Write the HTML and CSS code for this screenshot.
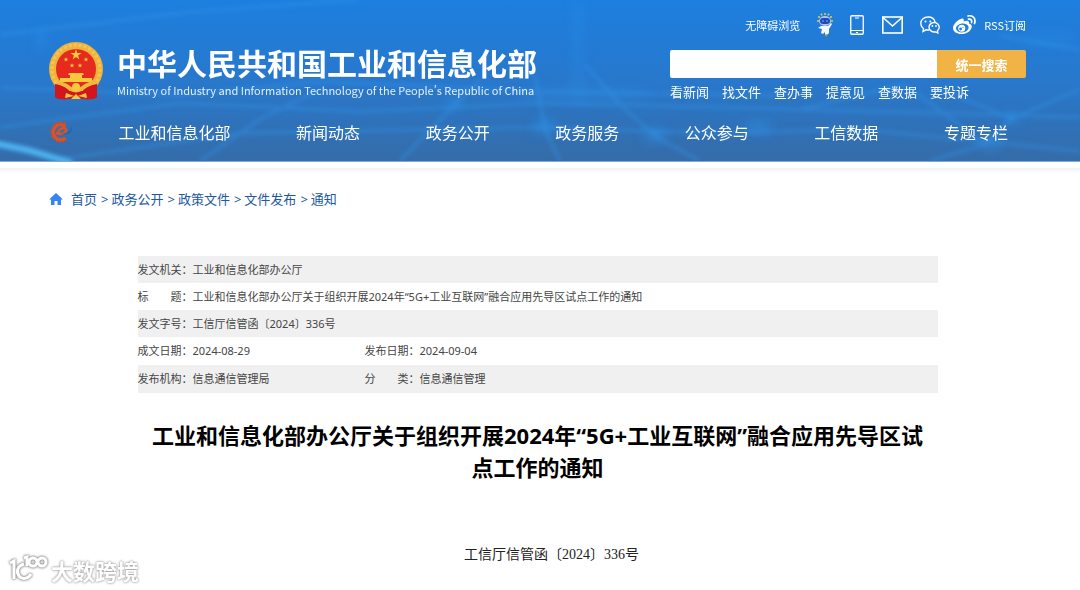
FILE: index.html
```html
<!DOCTYPE html>
<html lang="zh-CN">
<head>
    <meta charset="UTF-8">
    <meta name="viewport" content="width=device-width, initial-scale=1.0">
    <title>工业和信息化部办公厅关于组织开展2024年“5G+工业互联网”融合应用先导区试点工作的通知</title>
    <link rel="stylesheet" href="styles.css">
</head>
<body>

<header class="header">
    <svg class="header-bg" viewBox="0 0 1080 162" preserveAspectRatio="none" aria-hidden="true">
        <defs>
            <filter id="soft" x="-20%" y="-20%" width="140%" height="140%"><feGaussianBlur stdDeviation="2"/></filter>
            <filter id="wide" x="-50%" y="-50%" width="200%" height="200%"><feGaussianBlur stdDeviation="6"/></filter>
        </defs>
        <g fill="none" stroke="#3396ea" stroke-width="3" opacity=".45" filter="url(#soft)">
            <path d="M0 35 L190 12 L360 0"/>
            <path d="M0 128 L180 104 L360 112 L540 104 L720 108 L910 113 L1080 118"/>
            <path d="M60 160 L240 134 L540 128 L720 134 L860 130 L1080 152"/>
            <path d="M0 88 L180 96 L320 82 L540 92 L780 96"/>
            <path d="M585 65 L625 110 L660 140 L700 162"/>
            <path d="M535 75 L545 130 L560 162"/>
            <path d="M400 162 L455 105 L480 80"/>
            <path d="M940 90 L1012 119 L985 145 L930 162"/>
            <path d="M1012 119 L1080 90"/>
            <path d="M800 110 L905 85 L985 145"/>
            <path d="M1000 36 L1080 50"/>
            <path d="M200 162 L260 120 L320 90"/>
        </g>
        <g fill="#2f9bf5" opacity=".45" filter="url(#wide)">
            <rect x="573" y="0" width="10" height="105" opacity=".5"/>
            <rect x="38" y="28" width="6" height="22"/>
            <ellipse cx="585" cy="95" rx="70" ry="8" opacity=".5"/>
            <ellipse cx="545" cy="127" rx="12" ry="7"/>
            <ellipse cx="655" cy="136" rx="12" ry="7"/>
            <ellipse cx="758" cy="128" rx="14" ry="6"/>
            <ellipse cx="1012" cy="118" rx="8" ry="6"/>
            <ellipse cx="990" cy="144" rx="12" ry="6"/>
            <ellipse cx="454" cy="104" rx="8" ry="6"/>
            <ellipse cx="1050" cy="40" rx="30" ry="8" opacity=".4"/>
        </g>
        <path d="M-6 144 L28 151 L72 164" fill="none" stroke="#4fb9f6" stroke-width="6" filter="url(#soft)"/>
    </svg>

    <div class="wrap">
        <div class="masthead">
            <a class="brand" href="#">
                <svg class="emblem" viewBox="0 0 54 58" aria-hidden="true">
                    <path d="M7 40 L6 55 Q12 58 18 57 L36 57 Q43 58 48 55 L47 40 Z" fill="#d3161c"/>
                    <circle cx="27" cy="27" r="27" fill="#efb23c"/>
                    <circle cx="27" cy="27" r="24" fill="none" stroke="#f5c550" stroke-width="3" stroke-dasharray="3 2"/>
                    <circle cx="27" cy="27" r="20" fill="#e62a1d"/>
                    <g fill="#f8c93e">
                        <path d="M27 7 L28.3 11 L32.5 11 L29.1 13.5 L30.4 17.5 L27 15 L23.6 17.5 L24.9 13.5 L21.5 11 L25.7 11 Z"/>
                        <path id="star" d="M17 15 L17.6 16.7 L19.4 16.7 L18 17.8 L18.5 19.5 L17 18.5 L15.5 19.5 L16 17.8 L14.6 16.7 L16.4 16.7 Z"/>
                        <use href="#star" x="20"/>
                        <use href="#star" x="6" y="6"/>
                        <use href="#star" x="14" y="6"/>
                        <path d="M20 31 H34 L35 33 H33 V36 H43 V40 H11 V36 H21 V33 H19 Z"/>
                    </g>
                    <path d="M6 42 Q14 43 20 48 L18 57 Q9 58 6 55 Z" fill="#d3161c"/>
                    <path d="M48 42 Q40 43 34 48 L36 57 Q45 58 48 55 Z" fill="#d3161c"/>
                    <path d="M18 49 H36 V57 H18 Z" fill="#d3161c"/>
                    <path d="M9 40 Q17 43 22 47 Q27 50 32 47 Q37 43 45 40" fill="none" stroke="#f2b93f" stroke-width="4"/>
                    <circle cx="27" cy="45" r="4" fill="#f8c93e"/>
                    <path d="M17 51 L25 54 L16 56 Z M37 51 L29 54 L38 56 Z M22 57 L27 52 L32 57 Z" fill="#f8c93e"/>
                </svg>
                <span class="brand-text">
                    <span class="brand-cn">中华人民共和国工业和信息化部</span>
                    <span class="brand-en" lang="en">Ministry of Industry and Information Technology of the People’s Republic of China</span>
                </span>
            </a>

            <div class="tools">
                <div class="tool-links">
                    <a href="#">无障碍浏览</a>
                    <a href="#" class="robot" aria-label="智能问答">
                        <svg width="16" height="24" viewBox="0 0 16 24">
                            <g fill="#e3d23f">
                                <circle cx="2" cy="4" r="1"/><circle cx="4.500" cy="1.500" r="1"/><circle cx="8" cy="1" r="1"/><circle cx="11.500" cy="1.500" r="1"/><circle cx="14" cy="4" r="1"/><circle cx="1" cy="8" r="1"/><circle cx="15" cy="8" r="1"/>
                            </g>
                            <ellipse cx="8" cy="8" rx="6" ry="5" fill="#a9c6f2"/>
                            <rect x="3" y="5" width="10" height="6" rx="3" fill="#2747b5"/>
                            <path d="M5 8 H7 M9 8 H11" stroke="#6fb4ff"/>
                            <path d="M4 13 H11 L14 10 L15 11 L12 16 V20 L10 22 H8 V19 L6 21 L4 20 L5 16 L1 15 Z" fill="#f2f7ff"/>
                            <path d="M8 21 L9 24 L11 21 Z" fill="#d9a05c"/>
                        </svg>
                    </a>
                    <a href="#" class="phone" aria-label="手机版">
                        <svg width="14" height="20" viewBox="0 0 14 20" fill="none" stroke="#fff">
                            <rect x=".75" y=".75" width="12.500" height="18.500" rx="1" stroke-width="1.300"/>
                            <path d="M1 15.500 H13 M5 3 H9 M6 17.500 H8"/>
                        </svg>
                    </a>
                    <a href="#" class="mail" aria-label="邮箱">
                        <svg width="21" height="18" viewBox="0 0 21 18" fill="none" stroke="#fff" stroke-width="1.600">
                            <rect x=".8" y="1" width="19.400" height="16"/>
                            <path d="M1 1.500 L10.500 10 L20 1.500"/>
                        </svg>
                    </a>
                    <a href="#" class="wechat" aria-label="微信">
                        <svg width="20" height="18" viewBox="0 0 20 18" fill="none" stroke="#fff" stroke-width="1.400">
                            <path d="M9 14 Q7.500 14.200 6 13.800 L3 15.500 L3.500 12.500 Q.8 10.500 .8 7.500 C.8 3.500 4 1 8 1 C11.500 1 14.500 3 15 6.200"/>
                            <path d="M14.200 6.500 C17 6.500 19.200 8.700 19.200 11.200 Q19.200 13.300 17.500 14.800 L17.800 17 L15.800 15.900 C12 16.500 9 14.300 9 11.300 C9 8.600 11.400 6.500 14.200 6.500 Z"/>
                            <g fill="#fff" stroke="none"><circle cx="5.500" cy="5.500" r="1"/><circle cx="10.300" cy="5.500" r="1"/><circle cx="12.400" cy="10" r=".9"/><circle cx="16" cy="10" r=".9"/></g>
                        </svg>
                    </a>
                    <a href="#" class="weibo" aria-label="微博">
                        <svg width="23" height="19" viewBox="0 0 23 19">
                            <path d="M9 3.500 C11 3 11 5 10.500 6.500 C13 5.300 17 5 16 8.500 C18.500 9.200 19.300 11 18.500 13 C17 17 12.500 19 8.500 19 C4 19 0 16.700 0 13 C0 9 5.500 4.200 9 3.500 Z" fill="#fff"/>
                            <ellipse cx="9.300" cy="13" rx="6.400" ry="4.400" fill="#2380d9" transform="rotate(-8 9 13)"/>
                            <circle cx="8.700" cy="13.300" r="3.500" fill="#fff"/>
                            <circle cx="7.600" cy="14" r="1.400" fill="#2380d9"/>
                            <circle cx="10" cy="12.300" r=".6" fill="#2380d9"/>
                            <path d="M15 1 C20 -.3 23.200 4 21.500 8.500 M15.500 4.200 C18 3.700 19.200 5.500 18.500 7.500" fill="none" stroke="#fff" stroke-width="1.700" stroke-linecap="round"/>
                        </svg>
                    </a>
                    <a href="#" class="rss">RSS订阅</a>
                </div>
                <form class="search" action="#">
                    <input type="text" aria-label="搜索">
                    <button type="submit">统一搜索</button>
                </form>
                <div class="quick-links">
                    <a href="#">看新闻</a>
                    <a href="#">找文件</a>
                    <a href="#">查办事</a>
                    <a href="#">提意见</a>
                    <a href="#">查数据</a>
                    <a href="#">要投诉</a>
                </div>
            </div>
        </div>

        <nav class="nav">
            <a href="#" class="nav-logo" aria-label="首页">
                <svg width="24" height="22" viewBox="0 0 24 22" fill="none">
                    <path d="M17 3 A9.500 9.500 0 1 0 17 19" stroke="#d94a22" stroke-width="2" stroke-dasharray="2 1"/>
                    <path d="M16.500 5.500 A7.500 7.500 0 1 0 16.500 17" stroke="#e2501f" stroke-width="3"/>
                    <path d="M7 12 C12 14 18 12 17 8.500 C16 6 11 7 9 11" stroke="#e2501f" stroke-width="2.500"/>
                    <path d="M12 13 C18 13 22 10 22.500 5.500 C24 10 20 15 12 13 Z" fill="#1267b4"/>
                </svg>
            </a>
            <a href="#">工业和信息化部</a>
            <a href="#">新闻动态</a>
            <a href="#">政务公开</a>
            <a href="#">政务服务</a>
            <a href="#">公众参与</a>
            <a href="#">工信数据</a>
            <a href="#">专题专栏</a>
        </nav>
    </div>
</header>
<div class="header-line"></div>

<main class="wrap">
    <div class="crumbs">
        <svg width="14" height="12" viewBox="0 0 14 12" aria-hidden="true">
            <path d="M7 0 L14 6.500 H12 V12 H8.500 V8 H5.500 V12 H2 V6.500 H0 Z" fill="#3385f0"/>
        </svg>
        <a href="#">首页</a><span>&gt;</span>
        <a href="#">政务公开</a><span>&gt;</span>
        <a href="#">政策文件</a><span>&gt;</span>
        <a href="#">文件发布</a><span>&gt;</span>
        <a href="#">通知</a>
    </div>

    <article class="article">
        <table class="info">
            <tr>
                <th scope="row">发文机关：</th>
                <td colspan="3">工业和信息化部办公厅</td>
            </tr>
            <tr>
                <th scope="row">标　　题：</th>
                <td colspan="3">工业和信息化部办公厅关于组织开展2024年“5G+工业互联网”融合应用先导区试点工作的通知</td>
            </tr>
            <tr>
                <th scope="row">发文字号：</th>
                <td colspan="3">工信厅信管函〔2024〕336号</td>
            </tr>
            <tr class="tall">
                <th scope="row">成文日期：</th>
                <td class="first">2024-08-29</td>
                <th scope="row">发布日期：</th>
                <td>2024-09-04</td>
            </tr>
            <tr class="tall">
                <th scope="row">发布机构：</th>
                <td class="first">信息通信管理局</td>
                <th scope="row">分　　类：</th>
                <td>信息通信管理</td>
            </tr>
        </table>

        <h1>工业和信息化部办公厅关于组织开展2024年“5G+工业互联网”融合应用先导区试点工作的通知</h1>
        <p class="doc-no">工信厅信管函〔2024〕336号</p>
    </article>
</main>

<div class="watermark">
    <svg width="40" height="30" viewBox="0 0 40 30" fill="none" aria-hidden="true">
        <path d="M2 8 L6 6 V24"/>
        <path d="M16 9 C9 11 8 17 11 21 C14 25 20 24 23 19"/>
        <path d="M16 3 L19 2 V11"/>
        <circle cx="25" cy="7" r="4"/>
        <circle cx="34" cy="7" r="4"/>
    </svg>
    <span>大数跨境</span>
</div>

</body>
</html>
```

FILE: styles.css
```css
* {
    box-sizing: border-box;
}
body {
    margin: 0;
    background: #fff;
    color: #444;
    font-family: "Noto Sans", "Noto Sans CJK SC", sans-serif;
    font-size: 13px;
}
a {
    color: inherit;
    text-decoration: none;
}
svg {
    display: block;
}
.wrap {
    max-width: 1080px;
    margin: 0 auto;
    padding: 0 54px 0 49px;
}

/* header */
.header {
    position: relative;
    background: linear-gradient(#1d7fdf, #2878cc 50%, #356ca9);
    color: #fff;
    font-family: "Noto Sans CJK SC", sans-serif;
    overflow: hidden;
}
.header-bg {
    position: absolute;
    left: 0;
    top: 0;
    width: 100%;
    height: 100%;
}
.header .wrap {
    position: relative;
}
.header-line {
    height: 12px;
    border-top: 1px solid #7fa6cf;
    background: linear-gradient(#fff 6px, #edf2f6 6px, #fff);
}
.masthead {
    display: flex;
    justify-content: space-between;
    padding-top: 11px;
}
.brand {
    display: flex;
    align-items: flex-start;
    gap: 14px;
    padding-top: 31px;
}
.emblem {
    width: 54px;
    height: 58px;
}
.brand-text {
    display: flex;
    flex-direction: column;
    white-space: nowrap;
}
.brand-cn {
    font-size: 30px;
    line-height: 40px;
    font-weight: 700;
}
.brand-en {
    font-size: 11px;
    line-height: 16px;
    font-feature-settings: "pwid";
    color: #e4effb;
}
.tools {
    width: 356px;
}
.tool-links {
    display: flex;
    align-items: center;
    justify-content: flex-end;
    height: 27px;
    font-size: 11px;
}
.robot,
.phone,
.wechat {
    margin-left: 17px;
}
.mail {
    margin-left: 18px;
}
.weibo {
    margin-left: 13px;
}
.rss {
    margin-left: 8px;
}
.search {
    display: flex;
    height: 28px;
    margin-top: 12px;
}
.search input {
    flex: 1;
    min-width: 0;
    padding: 0 8px;
    border: 0;
    border-radius: 2px 0 0 2px;
    background: #fff;
}
.search button {
    width: 89px;
    padding: 0;
    border: 0;
    border-radius: 0 2px 2px 0;
    background: #f1b345;
    color: #fff;
    font-family: inherit;
    font-size: 13px;
    font-weight: 700;
}
.quick-links {
    display: flex;
    gap: 13px;
    margin-top: 4px;
    line-height: 20px;
}
.nav {
    display: flex;
    align-items: center;
    justify-content: space-between;
    height: 59px;
    padding-right: 18px;
    font-size: 16px;
}
.nav-logo {
    margin-right: -20px;
}

/* breadcrumb */
.crumbs {
    display: flex;
    align-items: center;
    margin-top: 16px;
    line-height: 20px;
    color: #22589e;
}
.crumbs svg {
    margin-right: 8px;
}
.crumbs span {
    margin: 0 3px 0 4px;
}

/* document */
.article {
    max-width: 800px;
    margin: 47px auto 0;
}
.info {
    width: 100%;
    border-collapse: collapse;
    font-size: 11px;
    line-height: 16px;
}
.info tr {
    height: 27px;
}
.info .tall {
    height: 28px;
}
.info tr:nth-child(odd) {
    background: #f0f0f0;
}
.info th {
    width: 55px;
    padding: 0;
    font-weight: 400;
    text-align: left;
    white-space: nowrap;
}
.info td {
    padding: 0;
}
.info .first {
    width: 172px;
}
h1 {
    margin: 26px 0 0;
    padding: 0 8px;
    color: #000;
    font-size: 22px;
    line-height: 32px;
    text-align: center;
}
.doc-no {
    margin: 60px 0 20px;
    color: #222;
    font-family: "Liberation Serif", "Noto Sans CJK SC", serif;
    font-size: 14px;
    line-height: 24px;
    text-align: center;
    text-indent: 28px;
}

/* watermark over the page corner */
.watermark {
    position: fixed;
    left: 8px;
    bottom: 3px;
    display: flex;
    align-items: center;
    gap: 3px;
    color: #fff;
    font-family: "Noto Sans CJK SC", sans-serif;
    font-size: 22px;
    line-height: 34px;
    font-weight: 700;
    text-shadow: 0 0 2px #999, 0 0 3px #aaa;
}
.watermark svg {
    stroke: #fff;
    stroke-width: 3;
    filter: drop-shadow(0 0 1px #888) drop-shadow(0 0 1px #aaa);
}
```
